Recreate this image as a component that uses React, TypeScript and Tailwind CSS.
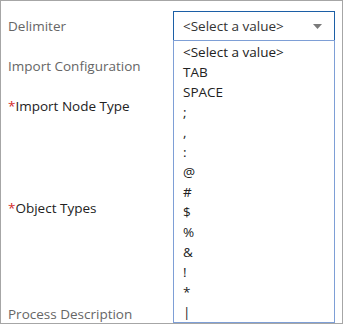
import React from "react";

const items = ["<Select a value>", "TAB", "SPACE", ";", ",", ":", "@", "#", "$", "%", "&", "!", "*", "|"];

export default function App() {
  return (
    <div className="relative w-[343px] h-[324px] border border-[#a6a6a6] bg-white overflow-hidden text-[13.5px] text-[#333]" style={{ fontFamily: '"Open Sans", "Noto Sans", sans-serif' }}>
      <div className="flex flex-col pl-[7px] pt-[10px]">
        <div className="flex items-center h-[30px]">
          <div className="w-[165px] text-[#666]">Delimiter</div>
          <div className="relative w-[162px] h-[30px] border border-[#1c5fa6] bg-white flex items-center pl-[9px] text-[#333]">
            &lt;Select a value&gt;
            <svg className="absolute right-[12px] top-[12px]" width="9" height="5" viewBox="0 0 9 5">
              <path d="M0 0 L9 0 L4.5 5 Z" fill="#7a7a7a" />
            </svg>
          </div>
        </div>
        <div className="h-[20px] mt-[15px] flex items-center text-[#666]">Import Configuration</div>
        <div className="h-[20px] mt-[20px] flex items-center text-[#222]">
          <span className="text-[#d42a2a]">*</span>Import Node Type
        </div>
        <div className="h-[20px] mt-[82px] flex items-center text-[#222]">
          <span className="text-[#d42a2a]">*</span>Object Types
        </div>
        <div className="h-[20px] mt-[86px] flex items-center text-[#666]">Process Description</div>
      </div>
      <div className="absolute left-[172px] top-[39px] w-[162px] h-[283px] border border-[#7e9fd6] bg-white pl-[9px] pt-[1px] text-[#222]">
        {items.map((it) => (
          <div key={it} className="h-[20px] leading-[20px]">{it}</div>
        ))}
      </div>
    </div>
  );
}
